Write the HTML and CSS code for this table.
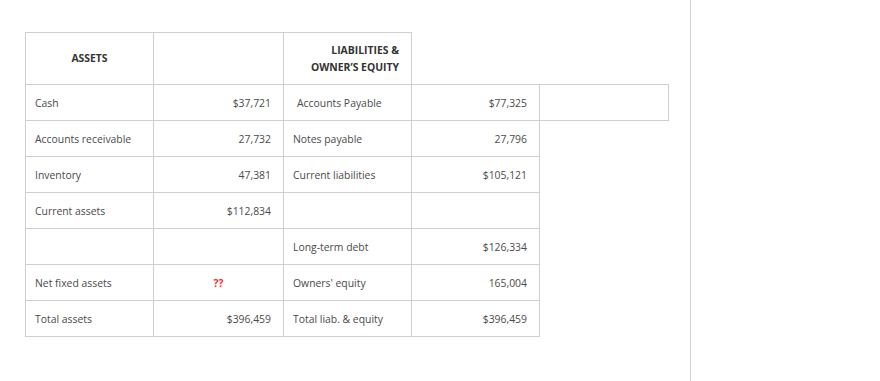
FILE: index.html
```html
<!DOCTYPE html>
<html>
<head>
<meta charset="utf-8">
<link rel="stylesheet" href="styles.css">
</head>
<body>
<div class="page">
  <table class="sheet">
    <colgroup>
      <col class="c1"><col class="c2"><col class="c3"><col class="c4"><col class="c5">
    </colgroup>
    <tr class="head">
      <th class="center">ASSETS</th>
      <th></th>
      <th class="right">LIABILITIES &amp;<br>OWNER’S EQUITY</th>
    </tr>
    <tr>
      <td>Cash</td>
      <td class="num">$37,721</td>
      <td class="shift">Accounts Payable</td>
      <td class="num">$77,325</td>
      <td></td>
    </tr>
    <tr>
      <td>Accounts receivable</td>
      <td class="num">27,732</td>
      <td>Notes payable</td>
      <td class="num">27,796</td>
    </tr>
    <tr>
      <td>Inventory</td>
      <td class="num">47,381</td>
      <td>Current liabilities</td>
      <td class="num">$105,121</td>
    </tr>
    <tr>
      <td>Current assets</td>
      <td class="num">$112,834</td>
      <td></td>
      <td></td>
    </tr>
    <tr>
      <td></td>
      <td></td>
      <td>Long-term debt</td>
      <td class="num">$126,334</td>
    </tr>
    <tr>
      <td>Net fixed assets</td>
      <td class="center"><span class="missing">??</span></td>
      <td>Owners' equity</td>
      <td class="num">165,004</td>
    </tr>
    <tr>
      <td>Total assets</td>
      <td class="num">$396,459</td>
      <td>Total liab. &amp; equity</td>
      <td class="num">$396,459</td>
    </tr>
  </table>
</div>
</body>
</html>
```

FILE: styles.css
```css
html, body {
  margin: 0;
  padding: 0;
  background: #fff;
}
body {
  font-family: "Open Sans", "Liberation Sans", sans-serif;
  font-size: 10.4px;
  color: #4a4a4a;
}
.page {
  width: 691px;
  height: 381px;
  border-right: 1px solid #d4d4d4;
  padding: 32px 0 0 25px;
  box-sizing: border-box;
}
.sheet {
  border-collapse: collapse;
  table-layout: fixed;
  width: 644px;
}
.c1 { width: 128px; }
.c2 { width: 130px; }
.c3 { width: 128px; }
.c4 { width: 128px; }
.c5 { width: 129px; }
.sheet th, .sheet td {
  border: 1px solid #cfcfcf;
  padding: 0 12px 0 9px;
  height: 35px;
  vertical-align: middle;
  text-align: left;
  white-space: nowrap;
}
.sheet tr.head th {
  height: 51px;
  font-weight: 700;
  font-size: 10.4px;
  color: #333;
  line-height: 17px;
}
.sheet .center { text-align: center; padding: 0 4px; }
.sheet .right { text-align: right; }
.sheet .num { text-align: right; }
.sheet .shift { padding-left: 13px; }
.missing {
  color: #ff2b2b;
  font-weight: 700;
}
```
